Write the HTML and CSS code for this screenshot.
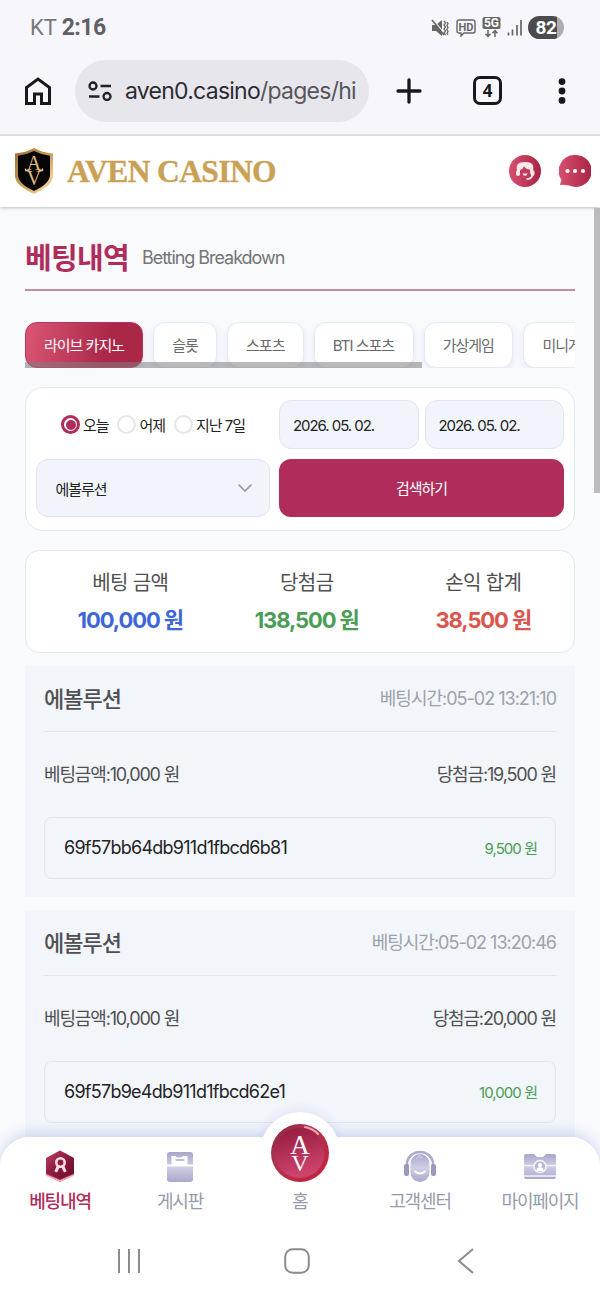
FILE: index.html
```html
<!DOCTYPE html>
<html lang="ko">
<head>
<meta charset="utf-8">
<title>AVEN CASINO</title>
<link rel="stylesheet" href="styles.css">
</head>
<body>
<div class="status">
  <div class="carrier">KT <b>2:16</b></div>
  <div class="indicators">
    <svg width="18" height="18" viewBox="0 0 18 18"><path d="M1 6h4l6-5v16l-6-5H1z" fill="#666"/><path d="M1 0l13 15" stroke="#f8f6fd" stroke-width="1.500"/><path d="M1 1l12 15" stroke="#666" stroke-width="1.600"/><path d="M13 2l1.500 2-1.500 2 1.500 2-1.500 2 1.500 2-1.500 2 1.500 2M16 3l1 1.500-1 2 1 2-1 2 1 2-1 2 1 1.500" stroke="#666" stroke-width="1.300" fill="none"/></svg>
    <svg class="hd" width="20" height="18" viewBox="0 0 20 18"><path d="M3 1h14q2 0 2 2v9q0 2-2 2H8l-3 3v-3H3q-2 0-2-2V3q0-2 2-2z" fill="none" stroke="#666" stroke-width="1.400"/><text x="10" y="11.500" text-anchor="middle">HD</text></svg>
    <svg class="fiveg" width="19" height="21" viewBox="0 0 19 21"><rect x=".5" width="18" height="12" rx="2" fill="#666"/><text x="9.500" y="10.200" text-anchor="middle">5G</text><path d="M6 13v6M3.500 16.700L6 19.300l2.500-2.600M13 20v-6M10.500 16.300L13 13.700l2.500 2.600" stroke="#666" stroke-width="1.500" fill="none"/></svg>
    <svg class="signal" width="16" height="18" viewBox="0 0 16 18"><path d="M1.500 13.500v3M5.500 10.500v6M10 6v10.500M14 1v15.500" stroke="#666" stroke-width="1.700"/></svg>
    <div class="battery">82</div>
  </div>
</div>
<div class="browser">
  <svg class="home" width="28" height="30" viewBox="0 0 28 30"><path d="M2.500 27.500V11.500L14 3l11.500 8.500v16h-8V18h-7v9.500z" fill="none" stroke="#17171d" stroke-width="3"/></svg>
  <div class="address">
    <svg width="24" height="20" viewBox="0 0 24 20" fill="none" stroke="#202126" stroke-width="2.300"><circle cx="5" cy="5" r="3.500"/><path d="M12.500 5H23M1 15.500h10.500"/><circle cx="19" cy="15.500" r="3.500"/></svg>
    <div class="url">aven0.casino<span>/pages/hi</span></div>
  </div>
  <svg class="plus" width="26" height="26" viewBox="0 0 26 26"><path d="M13 2v22M2 13h22" stroke="#17171d" stroke-width="3.300" stroke-linecap="round"/></svg>
  <div class="tabcount">4</div>
  <svg class="dots" width="8" height="26" viewBox="0 0 8 26" fill="#17171d"><circle cx="4" cy="3.600" r="3.400"/><circle cx="4" cy="13" r="3.400"/><circle cx="4" cy="22.400" r="3.400"/></svg>
</div>
<header class="site">
  <svg class="shield" width="40" height="46" viewBox="0 0 40 46">
    <defs><linearGradient id="gold" x2="1" y2="1"><stop stop-color="#9c7034"/><stop offset=".5" stop-color="#c59a55"/><stop offset=".8" stop-color="#edcf8d"/><stop offset="1" stop-color="#b98a47"/></linearGradient></defs>
    <path d="M20 0Q28 4.500 39 5.500V28Q39 37 20 46Q1 37 1 28V5.500Q12 4.500 20 0z" fill="url(#gold)"/>
    <path d="M20 3Q28 7 36 7.800V27Q36 35.500 20 43Q4 35.500 4 27V7.800Q12 7 20 3z" fill="#050505"/>
    <text class="gold-mono" text-anchor="middle"><tspan x="20" y="21.500">A</tspan><tspan x="20" y="36.500">V</tspan></text><path d="M11.500 20.500v2h4M28.500 20.500v2h-4" fill="none" stroke="#e0bd7e" stroke-width="1.300"/>
  </svg>
  <div class="brand">AVEN CASINO</div>
  <svg class="agent" width="32" height="32" viewBox="0 0 32 32">
    <defs><linearGradient id="rose"><stop stop-color="#d7506f"/><stop offset="1" stop-color="#a92345"/></linearGradient></defs>
    <circle cx="16" cy="16" r="16" fill="url(#rose)"/>
    <path d="M9 18C5.500 10 9 7 16 7s10.500 3 7 11z" fill="#f8e8e8"/><path d="M11 20V15q3-1 4-3.500Q18 15 21 14.500V19q-2 4-5 4-4 0-5-3z" fill="#c13d5e"/><rect x="7" y="15" width="4" height="6" rx="2" fill="#f8e8e8"/><rect x="21.500" y="15" width="4" height="6" rx="2" fill="#f8e8e8"/><path d="M13.500 18.500h5q-.5 2.200-2.500 2.200-2 0-2.500-2.200z" fill="#f8e8e8"/><path d="M23.500 20q-1 4-6 4.200" fill="none" stroke="#f8e8e8" stroke-width="1.800"/>
  </svg>
  <svg class="chat" width="32" height="32" viewBox="0 0 32 32"><path d="M16 0A16 16 0 1 1 10 30.500Q5 29.500 1 30Q1.500 27 2.500 25A16 16 0 0 1 16 0z" fill="url(#rose)"/><g fill="#fff"><circle cx="8.500" cy="16" r="2.100"/><circle cx="16" cy="16" r="2.100"/><circle cx="24" cy="16" r="2.100"/></g></svg>
</header>
<main class="page">
  <div class="heading"><h1>베팅내역</h1><span>Betting Breakdown</span></div>
  <div class="tabs">
    <div class="tab live">라이브 카지노</div><div class="tab slot">슬롯</div><div class="tab sports">스포츠</div><div class="tab bti">BTI 스포츠</div><div class="tab virtual">가상게임</div><div class="tab mini">미니게임</div>
    <div class="hscroll"></div>
  </div>
  <section class="filter">
    <div class="radios">
      <label class="on"><i></i>오늘</label><label><i></i>어제</label><label><i></i>지난 7일</label>
    </div>
    <div class="dates"><div class="field">2026. 05. 02.</div><div class="field">2026. 05. 02.</div></div>
    <div class="select">에볼루션<svg width="16" height="10" viewBox="0 0 16 10"><path d="M1.500 1.500L8 8l6.500-6.500" fill="none" stroke="#949ba8" stroke-width="1.700"/></svg></div>
    <div class="search">검색하기</div>
  </section>
  <section class="summary">
    <div><span>베팅 금액</span><b class="blue">100,000 원</b></div>
    <div><span>당첨금</span><b class="green">138,500 원</b></div>
    <div><span>손익 합계</span><b class="red">38,500 원</b></div>
  </section>
  <article class="bet">
    <div class="bet-head"><b>에볼루션</b><span>베팅시간:05-02 13:21:10</span></div>
    <div class="amounts"><span>베팅금액:10,000 원</span><span>당첨금:19,500 원</span></div>
    <div class="round"><span>69f57bb64db911d1fbcd6b81</span><em>9,500 원</em></div>
  </article>
  <article class="bet">
    <div class="bet-head"><b>에볼루션</b><span>베팅시간:05-02 13:20:46</span></div>
    <div class="amounts"><span>베팅금액:10,000 원</span><span>당첨금:20,000 원</span></div>
    <div class="round"><span>69f57b9e4db911d1fbcd62e1</span><em>10,000 원</em></div>
  </article>
</main>
<div class="vscroll"></div>
<div class="bottom">
  <div class="bump"></div>
  <nav class="menu">
    <div class="item active">
      <svg width="30" height="32" viewBox="0 0 30 32"><defs><linearGradient id="hex" x2="1" y2="1"><stop stop-color="#c04663"/><stop offset=".45" stop-color="#8f1c40"/><stop offset="1" stop-color="#630c2a"/></linearGradient></defs><path d="M15 1l14 7.500v17L15 32 1 25.500v-17z" fill="#d65d70"/><path d="M1 25l14 6 14-6" fill="none" stroke="#f1c7cc" stroke-width="1"/><path d="M15 .5L29 8v15.500L15 29.500 1 23.500V8z" fill="url(#hex)"/><circle cx="15.500" cy="12.500" r="4.200" fill="none" stroke="#ffdce3" stroke-width="2.600"/><path d="M13.500 16l-2.800 5.800M17.500 16l2.800 5.800" stroke="#ffdce3" stroke-width="3"/></svg><span>베팅내역</span></div>
    <div class="item">
      <svg width="30" height="32" viewBox="0 0 30 32"><defs><linearGradient id="lav" x2="0" y2="1"><stop stop-color="#a9a7c9"/><stop offset=".5" stop-color="#cfcfe6"/><stop offset="1" stop-color="#a9a8cb"/></linearGradient></defs><rect x="2" y="2" width="26" height="30" rx="3" fill="url(#lav)"/><path d="M6.500 15V6h4q1 2 4 1.500t4-1.500h4v9z" fill="#fff"/><path d="M10.500 10h9" stroke="#a9a7c9" stroke-width="1.500"/><path d="M2 15.500h26" stroke="#fff" stroke-width="2"/></svg><span>게시판</span></div>
    <div class="item"><div class="spacer"></div><span>홈</span></div>
    <div class="item">
      <svg width="34" height="32" viewBox="0 0 34 32"><path d="M4 17V14a13 12 0 0 1 26 0v3" fill="none" stroke="#aaa9c9" stroke-width="2.500"/><rect x="1" y="14" width="5" height="12" rx="2" fill="#9998bf"/><rect x="28" y="14" width="5" height="12" rx="2" fill="#9998bf"/><rect x="7.500" y="4" width="19" height="28" rx="9.500" fill="url(#lav)"/><path d="M11.500 21q5.500 5 11 0" fill="none" stroke="#fff" stroke-width="1.800"/><path d="M13 9l4-4v3l3-1" fill="none" stroke="#cfcee4" stroke-width="1"/></svg><span>고객센터</span></div>
    <div class="item">
      <svg width="34" height="32" viewBox="0 0 34 32"><path d="M1 6q0-2 2-2h8l3 3h6l3-3h8q2 0 2 2v21q0 2-2 2H3q-2 0-2-2z" fill="url(#lav)"/><path d="M1 15.500h32M1 26h32" stroke="#f3f3fb" stroke-width="1.300"/><circle cx="17" cy="16.500" r="6" fill="#bab9d6" stroke="#f5f4fc" stroke-width="1.600"/><circle cx="17" cy="15" r="2" fill="#fff"/><path d="M13.500 21q0-4 3.500-4t3.500 4z" fill="#fff"/></svg><span>마이페이지</span></div>
  </nav>
  <svg class="medal" width="58" height="58" viewBox="0 0 58 58"><defs><linearGradient id="med" x2=".25" y2="1"><stop stop-color="#92193d"/><stop offset="1" stop-color="#cd446b"/></linearGradient><linearGradient id="rim" x2="1" y2="1"><stop stop-color="#85253f"/><stop offset=".35" stop-color="#ad344f"/><stop offset="1" stop-color="#c81f3d"/></linearGradient></defs><circle cx="29" cy="29" r="29" fill="url(#rim)"/><circle cx="28.500" cy="29" r="25" fill="url(#med)"/><path d="M34 3q8 1.500 13 7" stroke="#eda0ad" stroke-width="2.200" fill="none" stroke-linecap="round"/><text class="mono" text-anchor="middle"><tspan x="29" y="30">A</tspan><tspan class="mono-v" x="29" y="46.500">V</tspan></text></svg>
  <div class="android">
    <svg width="26" height="26" viewBox="0 0 26 26"><path d="M3 1v24M13 1v24M23 1v24" stroke="#8b8b8b" stroke-width="2"/></svg>
    <svg width="26" height="26" viewBox="0 0 26 26"><rect x="1.200" y="1.200" width="23.600" height="23.600" rx="7.500" fill="none" stroke="#8b8b8b" stroke-width="2"/></svg>
    <svg class="back" width="18" height="26" viewBox="0 0 18 26"><path d="M16 1L2 13l14 12" fill="none" stroke="#8b8b8b" stroke-width="2"/></svg>
  </div>
</div>
</body>
</html>
```
FILE: styles.css
```css
* { box-sizing: border-box; }
body {
  margin: 0; width: 600px; height: 1300px; overflow: hidden; position: relative;
  background: #f9fafc; color: #222;
  font-family: Inter, "Noto Sans CJK KR", sans-serif; white-space: nowrap;
}
svg { display: block; flex: none; }
.status { height: 54px; background: #f8f6fd; display: flex; justify-content: space-between; padding: 0 36px 0 30px; align-items: center; }
.carrier { font: 22px/30px Roboto, sans-serif; color: #77777b; letter-spacing: -.1px; padding-top: 1px; }
.carrier b { color: #606064; font-size: 23px; font-weight: 700; letter-spacing: -.5px; }
.indicators { display: flex; align-items: center; padding-top: 1px; }
.hd { margin-left: 7px; }
.hd text { font: 700 11px Roboto, sans-serif; fill: #666; }
.fiveg { margin-left: 6px; }
.fiveg text { font: 700 12px Roboto, sans-serif; fill: #fff; }
.signal { margin-left: 6px; }
.battery { margin-left: 5px; width: 36px; height: 23px; border-radius: 12px; background: linear-gradient(90deg, #4b4b4e 29px, #aeadb3 29px); color: #fff; font: 700 19px/24px Roboto, sans-serif; text-align: center; letter-spacing: -.3px; }
.browser { height: 82px; background: #f8f6fd; border-bottom: 2px solid #e3e3e8; display: flex; align-items: center; padding: 0 34px 7px 24px; }
.address { margin-left: 23px; width: 294px; height: 62px; border-radius: 31px; background: #e7e6ed; display: flex; align-items: center; padding-left: 13px; gap: 13px; }
.url { font-size: 23px; line-height: 32px; letter-spacing: -.75px; color: #2c2c32; font-weight: 400; }
.url span { color: #55555b; }
.plus { margin-left: 27px; }
.tabcount { margin-left: 51px; width: 29px; height: 29px; border: 3px solid #17171d; border-radius: 7px; font: 700 17px/23px "Noto Sans", sans-serif; text-align: center; color: #17171d; }
.dots { margin-left: 56px; }
.site { height: 71px; background: #fff; display: flex; align-items: center; padding: 0 0 2px 14px; position: relative; box-shadow: 0 1px 3px rgba(0,0,0,.24); }
.gold-mono { font: 20px "Liberation Serif", serif; fill: #e0bd7e; }
.brand { margin-left: 13px; width: 420px; color: #caa154; font: 700 31.500px/40px "Liberation Serif", serif; letter-spacing: -.6px; padding-top: 2px; -webkit-text-stroke: .35px #caa154; }
.agent { margin-left: 22px; }
.chat { margin-left: 18px; }
.page { padding: 0 25px; display: flex; flex-direction: column; }
.heading { height: 84px; border-bottom: 2px solid #c48ba6; display: flex; align-items: center; padding-top: 19px; }
.heading h1 { margin: 0; width: 117px; color: #b02c5b; font-size: 29px; line-height: 40px; letter-spacing: -.7px; padding-top: 2px; }
.heading span { color: #757578; font-size: 18px; letter-spacing: -1.050px; }
.tabs { margin-top: 31px; height: 46px; position: relative; overflow: hidden; display: flex; gap: 10px; }
.tab { flex: none; height: 46px; border-radius: 12px; border: 1px solid #e5e9f3; background: #fff; color: #6a6a6c; font-size: 15px; line-height: 45px; text-align: center; letter-spacing: -1px; box-shadow: 0 3px 7px rgba(93,120,220,.14); }
.live { width: 118px; border-color: #b9335a; color: #fff; background: linear-gradient(100deg, #da5674, #ab2748 70%); }
.slot { width: 64px; } .sports { width: 76.500px; } .bti { width: 100px; } .virtual { width: 89.500px; } .mini { width: 90px; }
.hscroll { position: absolute; left: 0; bottom: 0; width: 397px; height: 6px; background: rgba(128,128,128,.55); }
.filter { margin-top: 19px; height: 144px; background: #fff; border: 1px solid #e2e6ee; border-radius: 18px; padding: 12px 9.500px; display: grid; grid-template-columns: 234.500px 285px; grid-template-rows: 49px 58px; gap: 10px 9px; font-size: 15px; letter-spacing: -1.050px; }
.radios { display: flex; align-items: center; padding-left: 25px; gap: 8.500px; }
.radios label { display: flex; align-items: center; gap: 3.500px; }
.radios i { width: 19px; height: 19px; border-radius: 50%; border: 2.500px solid #e6e6e6; }
.radios .on i { border: 3px solid #b02c5b; background: #b02c5b; background-clip: content-box; padding: 1.500px; }
.dates { display: flex; gap: 6px; }
.field { flex: 1; background: #f1f4fa; border: 1px solid #e0e5ed; border-radius: 12px; padding-left: 13px; line-height: 49px; letter-spacing: -1.050px; }
.select { background: #f1f4fa; border: 1px solid #e0e5ed; border-radius: 12px; padding: 0 16px 0 19px; display: flex; align-items: center; justify-content: space-between; }
.search { background: #af2c5b; border-radius: 12px; color: #fff; text-align: center; line-height: 60px; }
.summary { margin-top: 19px; height: 103px; background: #fff; border: 1px solid #e2e6ee; border-radius: 14px; display: grid; grid-template-columns: repeat(3, 176.500px); padding: 12px 0 0 16px; text-align: center; }
.summary div { display: flex; flex-direction: column; }
.summary span { font-size: 20px; line-height: 40px; height: 38px; letter-spacing: -.6px; color: #505052; }
.summary b { font-size: 22px; line-height: 38px; letter-spacing: -1.100px; font-weight: 650; }
.blue { color: #3d66d9; } .green { color: #4a9d55; } .red { color: #db554d; }
.bet { margin-top: 13px; height: 231px; padding: 0 19px; background: #f2f5fa; flex: none; }
.bet-head { height: 66px; border-bottom: 1px solid #e1e5ed; display: flex; justify-content: space-between; align-items: center; padding-bottom: 4px; }
.bet-head b { font-size: 22px; font-weight: 500; letter-spacing: -1px; color: #505052; }
.bet-head span { font-size: 18px; letter-spacing: -1px; color: #9ca2ad; }
.amounts { height: 85px; display: flex; justify-content: space-between; align-items: center; font-size: 18px; letter-spacing: -1.150px; color: #505052; padding-bottom: 4px; }
.round { height: 62px; border: 1px solid #e1e5ed; border-radius: 8px; padding: 0 18px 2px 19px; display: flex; justify-content: space-between; align-items: center; }
.round span { font-size: 18px; letter-spacing: -.74px; color: #232326; }
.round em { font-style: normal; font-size: 15px; letter-spacing: -.95px; color: #4a9d55; }
.vscroll { position: absolute; right: 0; top: 208px; width: 6px; height: 285px; background: #bcbcbe; }
.bottom { position: absolute; left: 0; top: 1137px; width: 600px; height: 163px; background: #fff; border-radius: 30px 30px 0 0; box-shadow: 0 -4px 14px rgba(90,120,220,.25); }
.bump { position: absolute; left: 260px; top: -25px; width: 80px; height: 80px; border-radius: 50%; background: #fff; box-shadow: 0 -4px 8px rgba(90,120,220,.1); }
.menu { position: relative; height: 96px; padding-top: 13px; display: grid; grid-template-columns: repeat(5, 120px); background: #fff; border-radius: 30px 30px 0 0; }
.item { display: flex; flex-direction: column; align-items: center; color: #959ca9; font-size: 18px; line-height: 24px; letter-spacing: -1.150px; gap: 8px; }
.item svg, .spacer { height: 32px; }
.active { color: #af2c5b; font-weight: 500; }
.medal { position: absolute; left: 271px; top: -13px; }
.mono { font: 27px "Liberation Serif", serif; fill: #fff; }
.mono-v { font-size: 24px; }
.android { height: 52px; display: grid; grid-template-columns: 26px 26px 18px; column-gap: 142px; padding: 14.500px 0 0 116px; }
.back { margin-left: 4.500px; }
```
